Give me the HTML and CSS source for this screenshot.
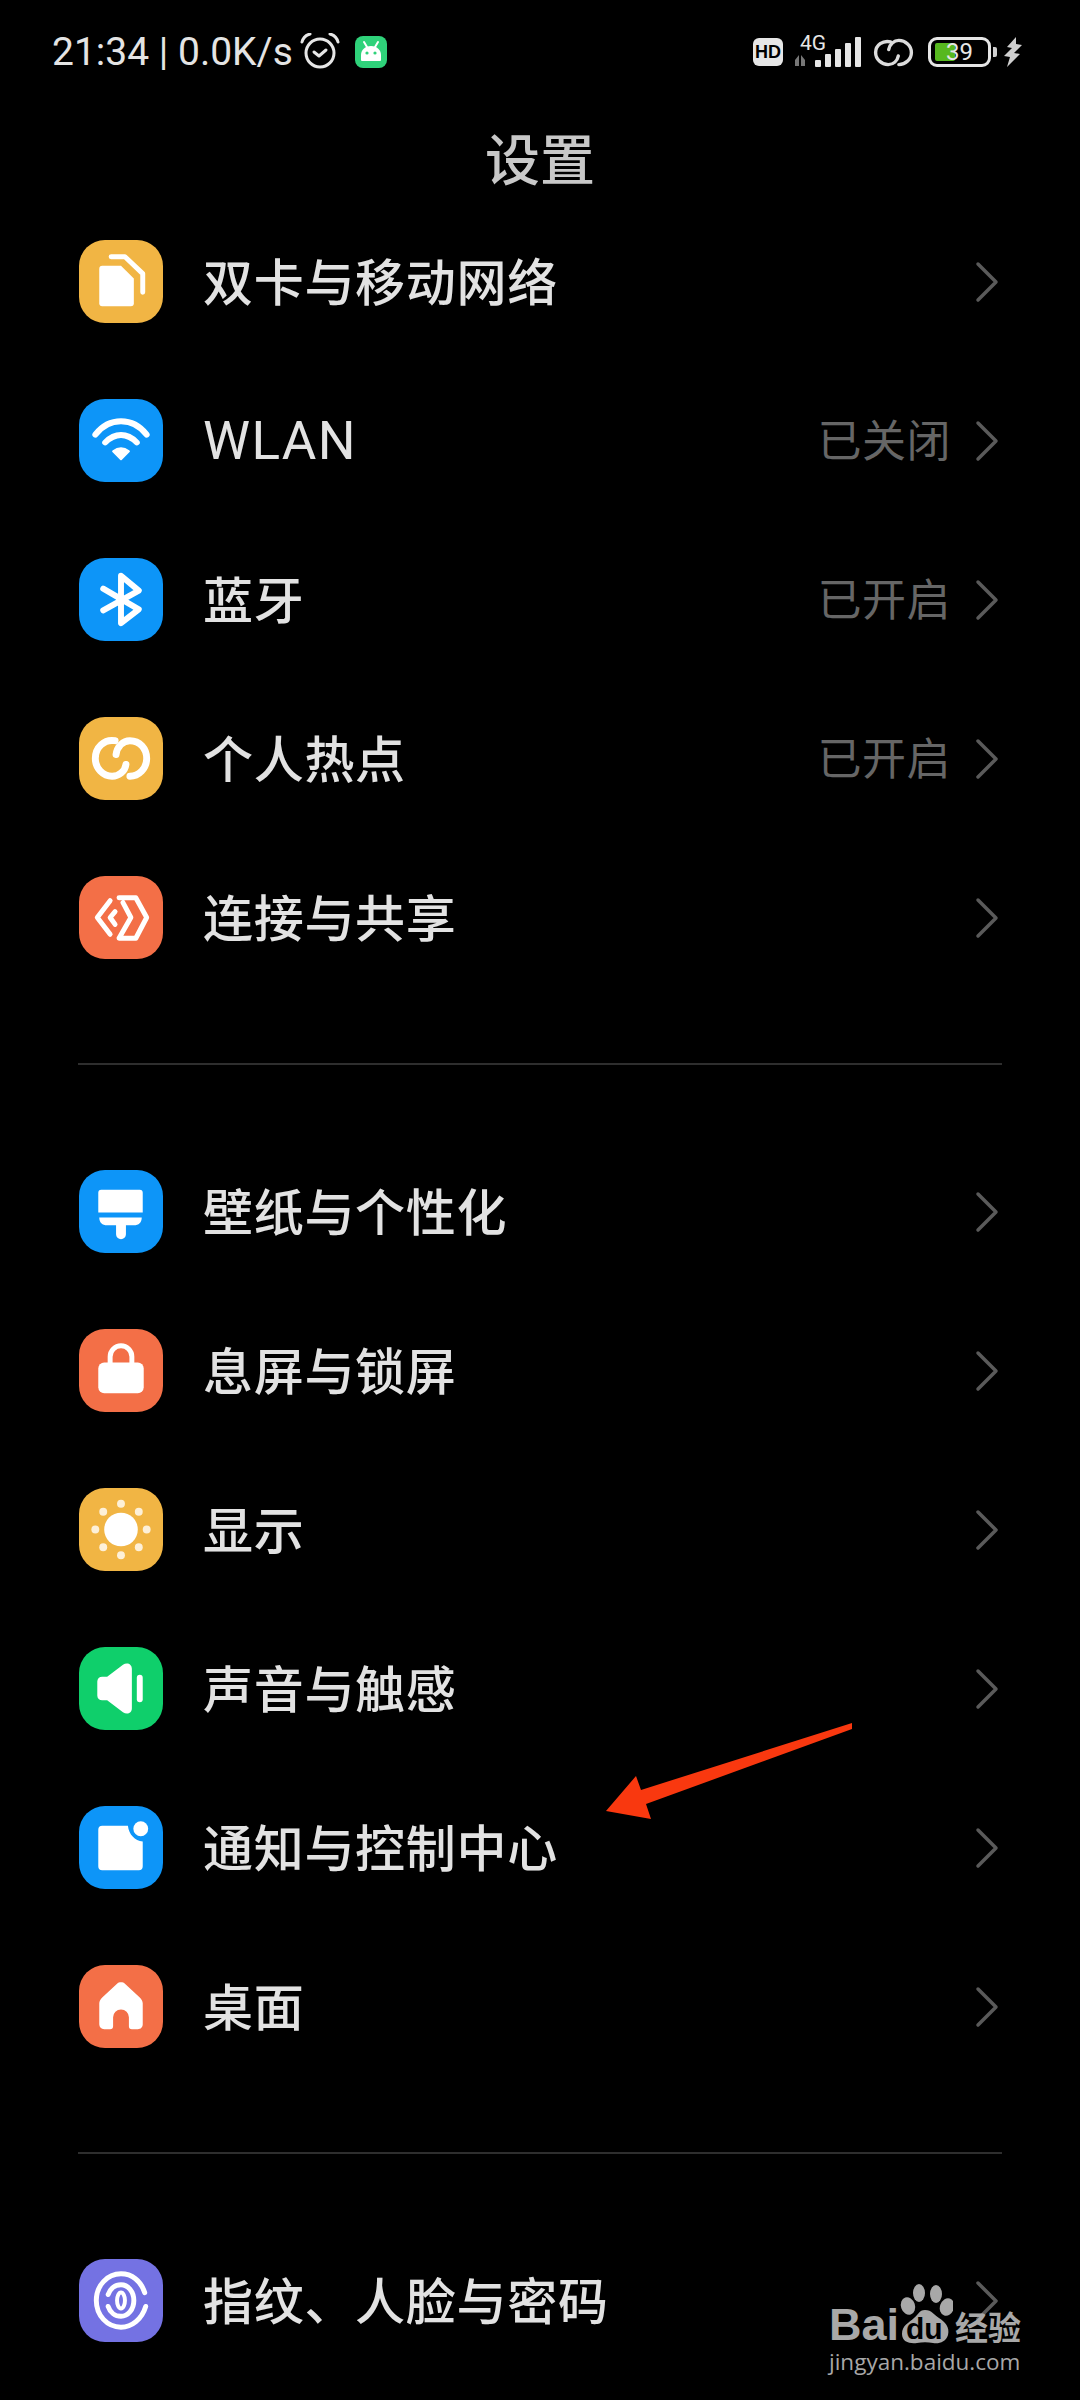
FILE: index.html
```html
<!DOCTYPE html>
<html lang="zh-CN">
<head>
<meta charset="utf-8">
<title>设置</title>
<link rel="stylesheet" href="styles.css">
</head>
<body>
<div class="status">
  <div class="status-left">
    <span class="clock">21:34 | 0.0K/s</span>
    <svg class="alarm" viewBox="0 0 40 36"><circle cx="20" cy="20" r="14" class="ln" stroke-width="3"/><path d="M14 19l5 4 7-6" class="ln" stroke-width="3"/><path d="M2 9C3 5 6 2 10 1M38 9C37 5 34 2 30 1" class="ln" stroke-width="3"/></svg>
    <svg class="droid" viewBox="0 0 32 32"><rect width="32" height="32" rx="8" fill="#2fd27a"/><path d="M6 24v-5c0-5 4-9 10-9s10 4 10 9v5a1 1 0 0 1-1 1H7a1 1 0 0 1-1-1z" fill="#fff"/><path d="M9 6l3 5M23 6l-3 5" stroke="#fff" stroke-width="2" stroke-linecap="round"/><circle cx="12" cy="17" r="1.6" fill="#2fd27a"/><circle cx="20" cy="17" r="1.6" fill="#2fd27a"/></svg>
  </div>
  <div class="status-right">
    <span class="hd">HD</span>
    <div class="net">
      <span class="net-4g">4G</span>
      <svg class="signal" viewBox="0 0 67 32"><path d="M0 24l4-5v11H0zM6 19l4 5v6H6z" fill="#777"/><g fill="#e6e6e6"><rect x="20" y="24" width="6" height="7" rx="1"/><rect x="30" y="18" width="6" height="13" rx="1"/><rect x="40" y="13" width="6" height="18" rx="1"/><rect x="50" y="7" width="6" height="24" rx="1"/><rect x="60" y="1" width="6" height="30" rx="1"/></g></svg>
    </div>
    <svg class="chain" viewBox="0 0 84 60"><path d="M36 8C20 4 5 15 5 30c0 14 12 25 26 25 11 0 19-8 21-18" class="ln" stroke-width="7"/><path d="M32 24C34 13 43 5 53 5c14 0 26 11 26 25S67 55 53 55" class="ln" stroke-width="7"/></svg>
    <div class="battery"><span class="battery-fill"></span><span class="battery-num">39</span></div>
    <span class="battery-tip"></span>
    <svg class="bolt" viewBox="0 0 18 30"><path d="M12 0L3 10l5 1-8 8 6 1-3 10 13-13-6-1 8-8-6-1z" fill="#cfcfcf"/></svg>
  </div>
</div>

<h1 class="title">设置</h1>

<section class="group">
  <div class="row">
    <svg class="icon yellow" viewBox="0 0 84 84"><path d="M23 26h19l13 13v25a3 3 0 0 1-3 3H23a3 3 0 0 1-3-3V29a3 3 0 0 1 3-3z" fill="#fff"/><path d="M32 17h14l18 17v19" class="ln" stroke-width="5"/></svg>
    <span class="label">双卡与移动网络</span><svg class="chev" viewBox="0 0 24 42"><path d="M3 3l18 18L3 39"/></svg>
  </div>
  <div class="row">
    <svg class="icon blue" viewBox="0 0 84 84"><path d="M16 36C30 18 54 18 68 36M26 44c10-10 22-10 32 0" class="ln" stroke-width="6"/><path d="M34 53c5-4 11-4 16 0l-8 8z" fill="#fff" stroke="#fff" stroke-width="2" stroke-linejoin="round"/></svg>
    <span class="label latin">WLAN</span><span class="value">已关闭</span><svg class="chev" viewBox="0 0 24 42"><path d="M3 3l18 18L3 39"/></svg>
  </div>
  <div class="row">
    <svg class="icon blue" viewBox="0 0 84 84"><path d="M24 31L60 52 42 66V18L60 33 24 53" class="ln" stroke-width="6"/></svg>
    <span class="label">蓝牙</span><span class="value">已开启</span><svg class="chev" viewBox="0 0 24 42"><path d="M3 3l18 18L3 39"/></svg>
  </div>
  <div class="row">
    <svg class="icon yellow" viewBox="0 0 84 84"><path d="M36 24C25 22 16 31 16 42c0 10 8 18 17 18 7 0 13-5 14-12" class="ln" stroke-width="7"/><path d="M37 38c1-8 7-14 14-14 10 0 17 8 17 18s-8 18-17 18" class="ln" stroke-width="7"/></svg>
    <span class="label">个人热点</span><span class="value">已开启</span><svg class="chev" viewBox="0 0 24 42"><path d="M3 3l18 18L3 39"/></svg>
  </div>
  <div class="row">
    <svg class="icon orange" viewBox="0 0 84 84"><path d="M31 25L18 42l13 17M36 36l-5 6 5 7" class="ln" stroke-width="5"/><path d="M40 22h17l11 20-11 21H40l12-21-8-15" class="ln" stroke-width="5"/></svg>
    <span class="label">连接与共享</span><svg class="chev" viewBox="0 0 24 42"><path d="M3 3l18 18L3 39"/></svg>
  </div>
</section>

<hr class="divider">

<section class="group">
  <div class="row">
    <svg class="icon blue" viewBox="0 0 84 84"><path d="M22 20h39a3 3 0 0 1 3 3v20H19V23a3 3 0 0 1 3-3zM20 48h43c0 5-3 8-8 8h-8v9a5 5 0 0 1-10 0v-9h-9c-5 0-8-3-8-8z" fill="#fff"/></svg>
    <span class="label">壁纸与个性化</span><svg class="chev" viewBox="0 0 24 42"><path d="M3 3l18 18L3 39"/></svg>
  </div>
  <div class="row">
    <svg class="icon orange" viewBox="0 0 84 84"><rect x="19" y="34" width="46" height="31" rx="6" fill="#fff"/><path d="M31 36v-8a11 11 0 0 1 22 0v8" class="ln" stroke-width="5"/></svg>
    <span class="label">息屏与锁屏</span><svg class="chev" viewBox="0 0 24 42"><path d="M3 3l18 18L3 39"/></svg>
  </div>
  <div class="row">
    <svg class="icon yellow" viewBox="0 0 84 84"><circle cx="42" cy="42" r="17" fill="#fff"/><g fill="#fdf0d8"><circle cx="42" cy="16" r="4"/><circle cx="42" cy="68" r="4"/><circle cx="16" cy="42" r="4"/><circle cx="68" cy="42" r="4"/><circle cx="24" cy="24" r="4"/><circle cx="60" cy="24" r="4"/><circle cx="24" cy="60" r="4"/><circle cx="60" cy="60" r="4"/></g></svg>
    <span class="label">显示</span><svg class="chev" viewBox="0 0 24 42"><path d="M3 3l18 18L3 39"/></svg>
  </div>
  <div class="row">
    <svg class="icon green" viewBox="0 0 84 84"><path d="M23 30h5l16-12c4-3 9-1 9 4v40c0 5-5 7-9 4L28 54h-5c-3 0-5-2-5-5V35c0-3 2-5 5-5z" fill="#fff"/><rect x="58" y="28" width="6" height="28" rx="3" fill="#fff"/></svg>
    <span class="label">声音与触感</span><svg class="chev" viewBox="0 0 24 42"><path d="M3 3l18 18L3 39"/></svg>
  </div>
  <div class="row">
    <svg class="icon blue" viewBox="0 0 84 84"><path d="M23 20h26c1 9 7 15 15 16v25a4 4 0 0 1-4 4H23a4 4 0 0 1-4-4V24a4 4 0 0 1 4-4z" fill="#fff"/><circle cx="62" cy="23" r="7.5" fill="#fff"/></svg>
    <span class="label">通知与控制中心</span><svg class="chev" viewBox="0 0 24 42"><path d="M3 3l18 18L3 39"/></svg>
  </div>
  <div class="row">
    <svg class="icon orange" viewBox="0 0 84 84"><path d="M38 19c2-2 6-2 8 0l15 14c2 2 3 4 3 6v21c0 3-2 5-5 5h-6c-2 0-3-1-3-3V53a8 8 0 0 0-16 0v9c0 2-1 3-3 3h-6c-3 0-5-2-5-5V39c0-2 1-4 3-6z" fill="#fff"/></svg>
    <span class="label">桌面</span><svg class="chev" viewBox="0 0 24 42"><path d="M3 3l18 18L3 39"/></svg>
  </div>
</section>

<hr class="divider">

<section class="group">
  <div class="row">
    <svg class="icon purple" viewBox="0 0 84 84"><path d="M66 34C62 22 53 15 42 15 28 15 17 27 17 42s11 27 25 27c11 0 21-8 25-21" class="ln" stroke-width="5"/><path d="M29 36c2-6 7-10 13-10 7 0 13 7 13 16s-6 16-13 16c-6 0-11-4-13-10" class="ln" stroke-width="5"/><ellipse cx="42" cy="42" rx="4" ry="8" class="ln" stroke-width="4"/></svg>
    <span class="label">指纹、人脸与密码</span><svg class="chev" viewBox="0 0 24 42"><path d="M3 3l18 18L3 39"/></svg>
  </div>
</section>

<svg class="arrow" viewBox="0 0 260 110"><path d="M256 13v6L50 94l5 15-45-8 30-35 5 14z" fill="#f9380f"/></svg>

<div class="mark">
  <div class="mark-top">
    <span class="mark-bai">Bai</span>
    <span class="paw">
      <svg class="paw-art" viewBox="0 0 56 62"><ellipse cx="11" cy="23" rx="7" ry="9" transform="rotate(-18 11 23)"/><ellipse cx="22" cy="10" rx="6" ry="9"/><ellipse cx="39" cy="11" rx="6" ry="9"/><ellipse cx="50" cy="24" rx="7" ry="9" transform="rotate(18 50 24)"/><path d="M28 27c7 0 9 5 14 8 6 4 11 9 9 17-2 7-9 9-15 8-5-1-11-1-16 0-7 1-15-1-15-9 0-9 7-11 12-16 4-3 5-8 11-8z"/></svg>
      <span class="paw-du">du</span>
    </span>
    <span class="mark-cn">经验</span>
  </div>
  <div class="mark-url">jingyan.baidu.com</div>
</div>
</body>
</html>
```

FILE: styles.css
```css
* { box-sizing: border-box; }
html, body {
  margin: 0;
  height: 2400px;
  overflow: hidden;
  background: #000;
}
body {
  position: relative;
  font-family: "Noto Sans CJK SC", "Noto Sans", sans-serif;
  color: #e6e6e6;
}
.ln {
  fill: none;
  stroke: #fff;
  stroke-linecap: round;
  stroke-linejoin: round;
}
.status {
  height: 104px;
  padding: 33px 58px 0 52px;
  display: flex;
  justify-content: space-between;
  align-items: flex-start;
}
.status-left { display: flex; align-items: flex-start; }
.clock {
  font: 400 39px/38px Roboto, sans-serif;
  color: #e4e4e4;
  width: 248px;
  white-space: nowrap;
}
.alarm { width: 40px; height: 36px; }
.alarm .ln { stroke: #e6e6e6; }
.droid { width: 32px; height: 32px; margin: 3px 0 0 15px; }
.status-right { display: flex; align-items: flex-start; }
.hd {
  width: 30px;
  height: 28px;
  margin-top: 5px;
  background: #e6e6e6;
  border-radius: 6px;
  color: #000;
  font: 700 18px/28px "Liberation Sans", sans-serif;
  text-align: center;
}
.net { position: relative; width: 67px; height: 32px; margin: 3px 0 0 12px; }
.net-4g {
  position: absolute;
  left: 5px;
  top: -3px;
  font: 400 21px/20px Roboto, sans-serif;
  color: #e6e6e6;
}
.signal { width: 67px; height: 32px; display: block; }
.chain { width: 41px; height: 29px; margin: 5px 0 0 11px; }
.chain .ln { stroke: #dcdcdc; }
.battery {
  position: relative;
  width: 63px;
  height: 30px;
  margin: 4px 0 0 14px;
  border: 3px solid #e6e6e6;
  border-radius: 9px;
}
.battery-fill {
  position: absolute;
  left: 4px;
  top: 3px;
  width: 20px;
  height: 18px;
  background: #57b81f;
  border-radius: 2px;
}
.battery-num {
  position: absolute;
  left: 0;
  right: 0;
  top: 0;
  text-align: center;
  font: 400 24px/24px Roboto, sans-serif;
  color: #e6e6e6;
}
.battery-tip {
  width: 4px;
  height: 10px;
  margin: 14px 0 0 2px;
  background: #cfcfcf;
  border-radius: 0 2px 2px 0;
}
.bolt { width: 18px; height: 30px; margin: 4px 0 0 7px; }
.title {
  margin: 0;
  height: 98px;
  text-align: center;
  font-weight: 500;
  font-size: 55px;
  line-height: 104px;
  color: #c8c8c8;
}
.group { margin: 0; }
.row {
  height: 159px;
  padding: 0 81px 0 79px;
  display: flex;
  align-items: center;
}
.icon { width: 84px; height: 83px; flex: none; border-radius: 26px; }
.yellow { background: #f1b544; }
.blue { background: #0d95f8; }
.orange { background: #f36f47; }
.green { background: #0fcf6b; }
.purple { background: #7472e3; }
.label {
  margin-left: 40px;
  margin-right: auto;
  margin-bottom: 5px;
  font-size: 50px;
  font-weight: 500;
  line-height: 70px;
  letter-spacing: 0.7px;
  color: #e2e2e2;
}
.latin {
  margin-bottom: 0;
  font-family: Roboto, sans-serif;
  font-size: 53px;
  font-weight: 400;
  letter-spacing: 1.4px;
}
.value {
  margin: 0 24px 5px 0;
  font-size: 44px;
  line-height: 60px;
  letter-spacing: 0.5px;
  color: #666;
}
.chev { width: 24px; height: 42px; flex: none; }
.chev path {
  fill: none;
  stroke: #5a5a5a;
  stroke-width: 3.5;
  stroke-linecap: round;
  stroke-linejoin: round;
}
.divider {
  margin: 66px 78px 67px;
  height: 2px;
  border: 0;
  background: #2e2e2e;
}
.arrow {
  position: absolute;
  left: 596px;
  top: 1710px;
  width: 260px;
  height: 110px;
}
.mark {
  position: absolute;
  left: 829px;
  top: 2283px;
  width: 200px;
  color: #a8a8a8;
}
.mark-top { display: flex; align-items: flex-end; height: 62px; }
.mark-bai {
  font: 700 45px/40px "Liberation Sans", sans-serif;
  width: 68px;
}
.paw { position: relative; width: 56px; height: 62px; flex: none; }
.paw-art { width: 56px; height: 62px; fill: #a8a8a8; display: block; }
.paw-du {
  position: absolute;
  left: 9px;
  bottom: -2px;
  font: 700 30px/36px "Liberation Sans", sans-serif;
  color: #000;
}
.mark-cn {
  margin-left: 2px;
  font-size: 33px;
  line-height: 38px;
  font-weight: 700;
  white-space: nowrap;
}
.mark-url {
  font: 400 22.5px/34px "Open Sans", sans-serif;
  color: #a8a8a8;
  white-space: nowrap;
}
```
